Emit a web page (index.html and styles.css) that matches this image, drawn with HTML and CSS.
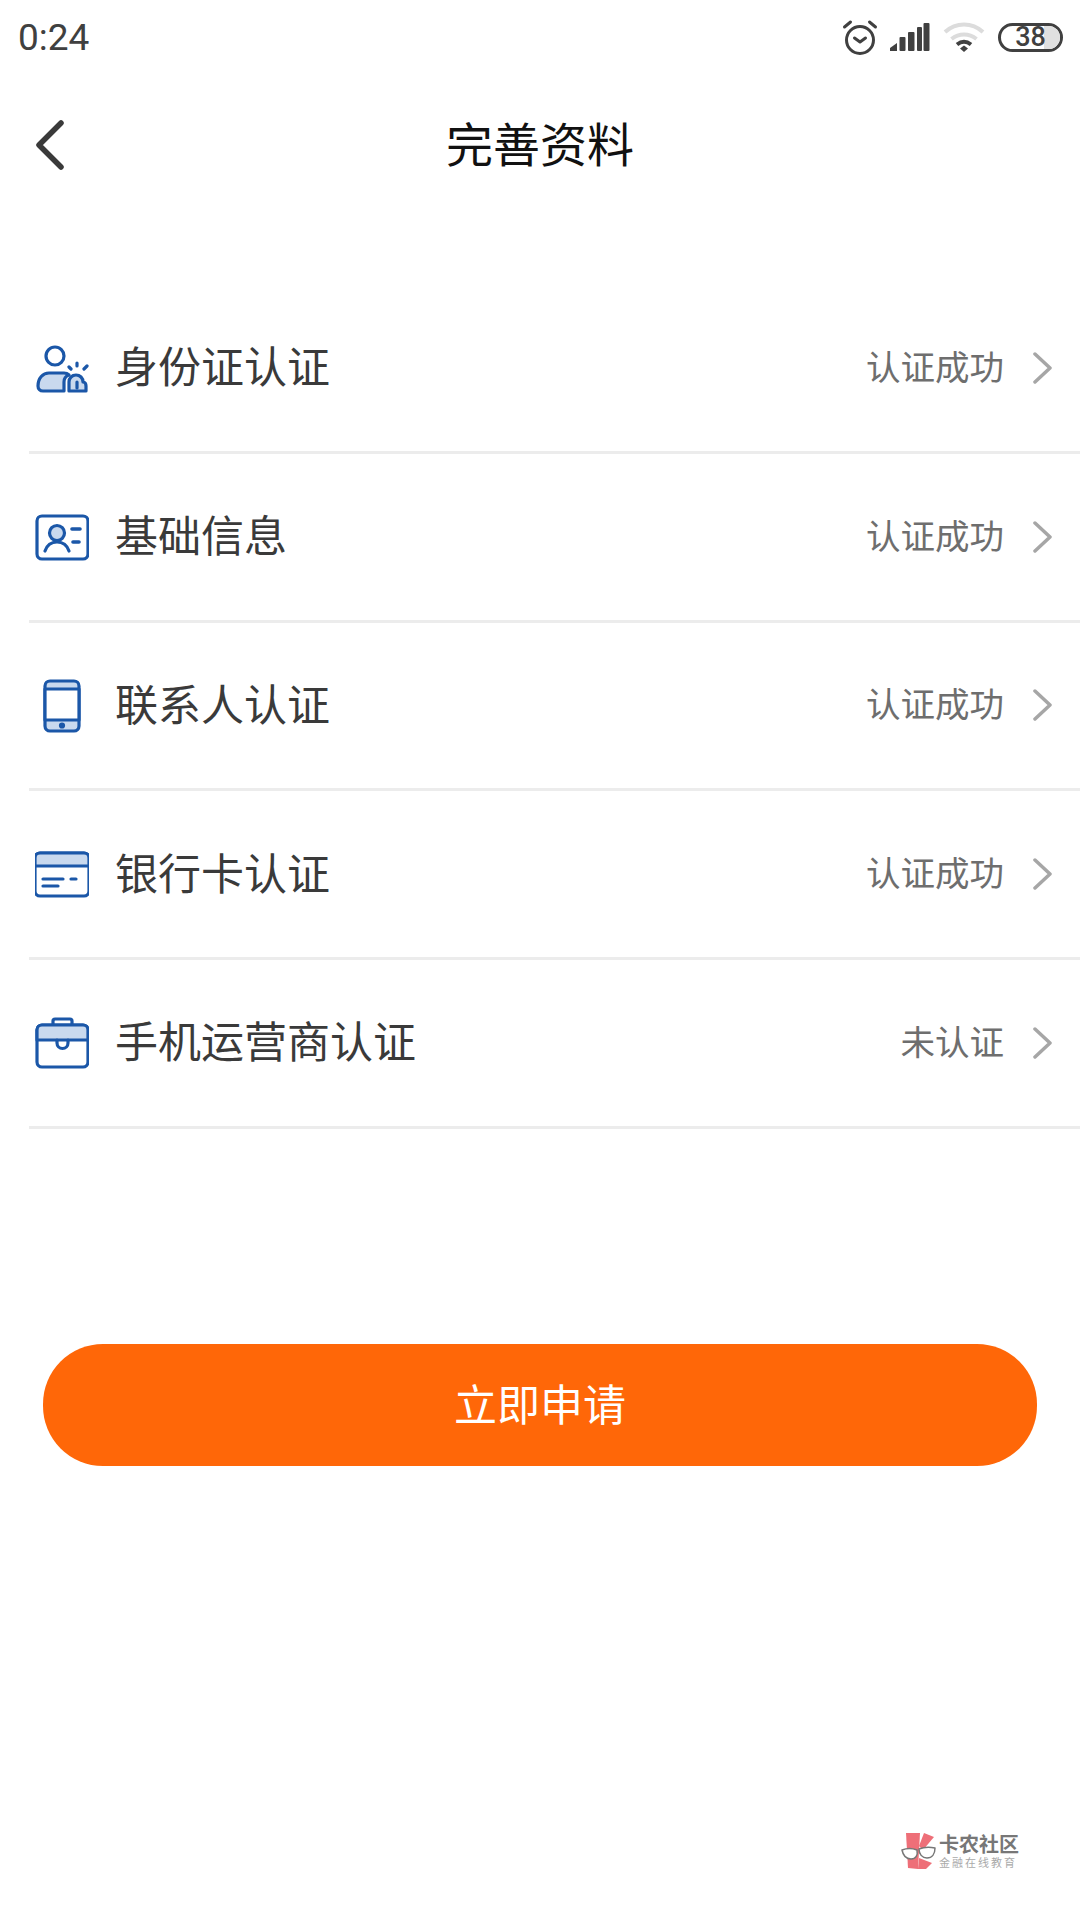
FILE: index.html
```html
<!DOCTYPE html>
<html lang="zh-CN">
<head>
    <meta charset="UTF-8">
    <meta name="viewport" content="width=device-width, initial-scale=1.0">
    <link rel="stylesheet" href="styles.css">
    <title>完善资料</title>
</head>
<body>
    <div class="status-bar">
        <span class="status-time">0:24</span>
        <div class="status-icons">
            <svg class="icon-alarm" width="36" height="36" viewBox="0 0 36 36" fill="none" stroke="#404040" stroke-width="3" stroke-linecap="round" stroke-linejoin="round">
                <circle cx="18" cy="21" r="13.500"/>
                <path d="M12.500 19l5.500 4 5.500-4"/>
                <path d="M2.500 8l6-5M33.500 8l-6-5"/>
            </svg>
            <svg class="icon-signal" width="40" height="30" viewBox="0 0 40 30" fill="#404040">
                <path d="M0 29v-3l7-5v8z"/>
                <rect x="9.500" y="15" width="6" height="14" rx="1"/>
                <rect x="18" y="10" width="6.500" height="19" rx="1"/>
                <rect x="27" y="5" width="5" height="24" rx="1"/>
                <rect x="33.500" y="1" width="6" height="28" rx="1"/>
            </svg>
            <svg class="icon-wifi" width="42" height="32" viewBox="0 0 42 32" fill="none">
                <path d="M2 11c11-10 27-10 38 0" stroke="#dcdcdc" stroke-width="4"/>
                <path d="M8.500 18c7.500-6 17.500-6 25 0" stroke="#dcdcdc" stroke-width="4"/>
                <path d="M14 23.500c4.500-3.500 9.500-3.500 14 0" stroke="#404040" stroke-width="4"/>
                <path d="M17 27.500l4-3 4 3-4 3.500z" fill="#404040"/>
            </svg>
            <div class="battery">
                <div class="battery-fill"></div>
                <span class="battery-num">38</span>
            </div>
        </div>
    </div>

    <div class="nav-bar">
        <svg class="nav-back" width="32" height="50" viewBox="0 0 32 50" fill="none" stroke="#3a3a3a" stroke-width="5.500" stroke-linecap="round" stroke-linejoin="round">
            <path d="M27 3L5 25l22 22"/>
        </svg>
        <h1 class="nav-title">完善资料</h1>
    </div>

    <ul class="auth-list">
        <li class="auth-row">
            <svg class="auth-icon" width="54" height="54" viewBox="0 0 54 54" fill="none" stroke="#1b57a8" stroke-width="3.200" stroke-linecap="round" stroke-linejoin="round">
                <path d="M3 44c0-8 5-13 11-13h15c2 0 4 1 5 2-3 1-5 4-5 7v9H8c-3 0-5-2-5-5z" fill="#c9d9ee"/>
                <circle cx="20" cy="14" r="9"/>
                <path d="M34 49v-9c0-4 3-7 7-7s7 3 7 7c2 0 3 2 3 4v5z" fill="#c9d9ee"/>
                <path d="M42 40v6"/>
                <path d="M34 25l2 2M42 21v3M52 24l-3 3"/>
            </svg>
            <span class="auth-label">身份证认证</span>
            <span class="auth-status">认证成功</span>
            <svg class="auth-arrow" width="20" height="32" viewBox="0 0 20 32" fill="none" stroke="#a6a6a6" stroke-width="3.500" stroke-linecap="round" stroke-linejoin="round">
                <path d="M2 2l15 14L2 30"/>
            </svg>
        </li>
        <li class="auth-row">
            <svg class="auth-icon" width="54" height="54" viewBox="0 0 54 54" fill="none" stroke="#1b57a8" stroke-width="3.200" stroke-linecap="round" stroke-linejoin="round">
                <rect x="2" y="5" width="51" height="43" rx="5"/>
                <circle cx="22" cy="22" r="7.500" fill="#c9d9ee"/>
                <path d="M10 40c2-6 6-9 12-9s10 3 12 9"/>
                <path d="M37 18h8M38 31h6" stroke-width="3.600"/>
            </svg>
            <span class="auth-label">基础信息</span>
            <span class="auth-status">认证成功</span>
            <svg class="auth-arrow" width="20" height="32" viewBox="0 0 20 32" fill="none" stroke="#a6a6a6" stroke-width="3.500" stroke-linecap="round" stroke-linejoin="round">
                <path d="M2 2l15 14L2 30"/>
            </svg>
        </li>
        <li class="auth-row">
            <svg class="auth-icon" width="54" height="54" viewBox="0 0 54 54" fill="none" stroke="#1b57a8" stroke-width="3.200" stroke-linecap="round" stroke-linejoin="round">
                <rect x="10" y="2" width="34" height="50" rx="5" fill="#c9d9ee"/>
                <rect x="10" y="10" width="34" height="31" fill="#fff"/>
                <circle cx="27" cy="46.500" r="1.500" fill="#1b57a8"/>
            </svg>
            <span class="auth-label">联系人认证</span>
            <span class="auth-status">认证成功</span>
            <svg class="auth-arrow" width="20" height="32" viewBox="0 0 20 32" fill="none" stroke="#a6a6a6" stroke-width="3.500" stroke-linecap="round" stroke-linejoin="round">
                <path d="M2 2l15 14L2 30"/>
            </svg>
        </li>
        <li class="auth-row">
            <svg class="auth-icon" width="54" height="54" viewBox="0 0 54 54" fill="none" stroke="#1b57a8" stroke-width="3.200" stroke-linecap="round" stroke-linejoin="round">
                <rect x="0" y="5" width="54" height="43" rx="5"/>
                <path d="M5 5h44a5 5 0 0 1 5 5v8H0v-8a5 5 0 0 1 5-5z" fill="#c9d9ee"/>
                <path d="M8 31h20M36 31h5M8 38h15"/>
            </svg>
            <span class="auth-label">银行卡认证</span>
            <span class="auth-status">认证成功</span>
            <svg class="auth-arrow" width="20" height="32" viewBox="0 0 20 32" fill="none" stroke="#a6a6a6" stroke-width="3.500" stroke-linecap="round" stroke-linejoin="round">
                <path d="M2 2l15 14L2 30"/>
            </svg>
        </li>
        <li class="auth-row">
            <svg class="auth-icon auth-icon-case" width="54" height="54" viewBox="0 0 54 54" fill="none" stroke="#1b57a8" stroke-width="3.200" stroke-linecap="round" stroke-linejoin="round">
                <path d="M18 9V5a2 2 0 0 1 2-2h15a2 2 0 0 1 2 2v4"/>
                <rect x="2" y="9" width="51" height="42" rx="5"/>
                <path d="M7 9h41a5 5 0 0 1 5 5v10H2V14a5 5 0 0 1 5-5z" fill="#c9d9ee"/>
                <path d="M22 24v3a5.500 5.500 0 0 0 11 0v-3"/>
            </svg>
            <span class="auth-label">手机运营商认证</span>
            <span class="auth-status">未认证</span>
            <svg class="auth-arrow" width="20" height="32" viewBox="0 0 20 32" fill="none" stroke="#a6a6a6" stroke-width="3.500" stroke-linecap="round" stroke-linejoin="round">
                <path d="M2 2l15 14L2 30"/>
            </svg>
        </li>
    </ul>

    <div class="apply-wrap">
        <button class="apply-btn">立即申请</button>
    </div>

    <div class="watermark">
        <svg class="watermark-logo" width="36" height="38" viewBox="0 0 36 38">
            <path d="M5 1h14l-2 36-10-1z" fill="#ee6f78"/>
            <path d="M23 1l10 4-11 13-4-4z" fill="#ee6f78"/>
            <path d="M18 26l13 5-6 6h-8z" fill="#ee6f78"/>
            <path d="M1 18c5-2 10-2 15 0 1 5-1 9-6 9-6 0-8-4-9-9zM18 17c5-2 11-2 16-1 0 6-3 10-8 10-5 0-8-4-8-9z" fill="#fff" stroke="#777" stroke-width="1.500" stroke-linejoin="round"/>
        </svg>
        <div class="watermark-text">
            <span class="watermark-name">卡农社区</span>
            <span class="watermark-sub">金融在线教育</span>
        </div>
    </div>
</body>
</html>
```

FILE: styles.css
```css
html, body {
  margin: 0;
  padding: 0;
}

body {
  width: 1080px;
  height: 1920px;
  background-color: #ffffff;
  font-family: "Noto Sans CJK SC", "Noto Sans", sans-serif;
  color: #333333;
  overflow: hidden;
}

/* status bar */
.status-bar {
  height: 74px;
  display: flex;
  align-items: center;
  justify-content: space-between;
  padding: 0 17px 0 18px;
}

.status-time {
  font-family: Roboto, sans-serif;
  font-size: 37px;
  color: #404040;
}

.status-icons {
  display: flex;
  align-items: center;
}

.icon-alarm {
  margin-right: 12px;
}

.icon-signal {
  margin-right: 13px;
}

.icon-wifi {
  margin-right: 13px;
}

.battery {
  position: relative;
  width: 59px;
  height: 23px;
  border: 3px solid #404040;
  border-radius: 15px;
  display: flex;
  align-items: center;
  justify-content: center;
}

.battery-fill {
  position: absolute;
  right: 0;
  top: 0;
  bottom: 0;
  width: 16px;
  border-radius: 0 12px 12px 0;
  background-color: #e0e0e0;
}

.battery-num {
  position: relative;
  font-family: Roboto, sans-serif;
  font-size: 27px;
  font-weight: 500;
  color: #404040;
  line-height: 23px;
}

/* nav */
.nav-bar {
  position: relative;
  height: 92px;
  margin-top: 21px;
  display: flex;
  align-items: center;
  justify-content: center;
}

.nav-back {
  position: absolute;
  left: 34px;
  top: 25px;
}

.nav-title {
  margin: 0;
  font-size: 47px;
  font-weight: 400;
  color: #111111;
}

/* list */
.auth-list {
  list-style: none;
  margin: 98px 0 0 29px;
  padding: 0;
}

.auth-row {
  box-sizing: content-box;
  height: 160.750px;
  padding-bottom: 5px;
  padding-right: 26px;
  border-bottom: 3px solid #ececec;
  display: flex;
  align-items: center;
}

.auth-icon {
  flex-shrink: 0;
  margin: 7px 26px 0 6px;
}

.auth-icon-case {
  margin-top: 5px;
}

.auth-label {
  flex: 1;
  margin-bottom: 2px;
  font-size: 43px;
  color: #3a3a3a;
}

.auth-status {
  margin-bottom: 1px;
  font-size: 34.500px;
  color: #6e6e6e;
  margin-right: 29px;
}

.auth-arrow {
  margin: 5px 1px 0 0;
}

/* button */
.apply-wrap {
  padding: 215px 43px 0;
}

.apply-btn {
  display: block;
  width: 994px;
  height: 122px;
  padding: 0 0 6px;
  border: none;
  border-radius: 60px;
  background-color: #ff6708;
  color: #ffffff;
  font-family: inherit;
  font-size: 43px;
}

/* watermark */
.watermark {
  position: absolute;
  left: 901px;
  top: 1832px;
  display: flex;
  align-items: center;
  gap: 2px;
}

.watermark-text {
  display: flex;
  flex-direction: column;
}

.watermark-name {
  display: block;
  font-size: 20px;
  font-weight: 700;
  line-height: 22px;
  color: #777777;
}

.watermark-sub {
  display: block;
  font-size: 11px;
  line-height: 14px;
  letter-spacing: 2px;
  color: #aaaaaa;
}
```
